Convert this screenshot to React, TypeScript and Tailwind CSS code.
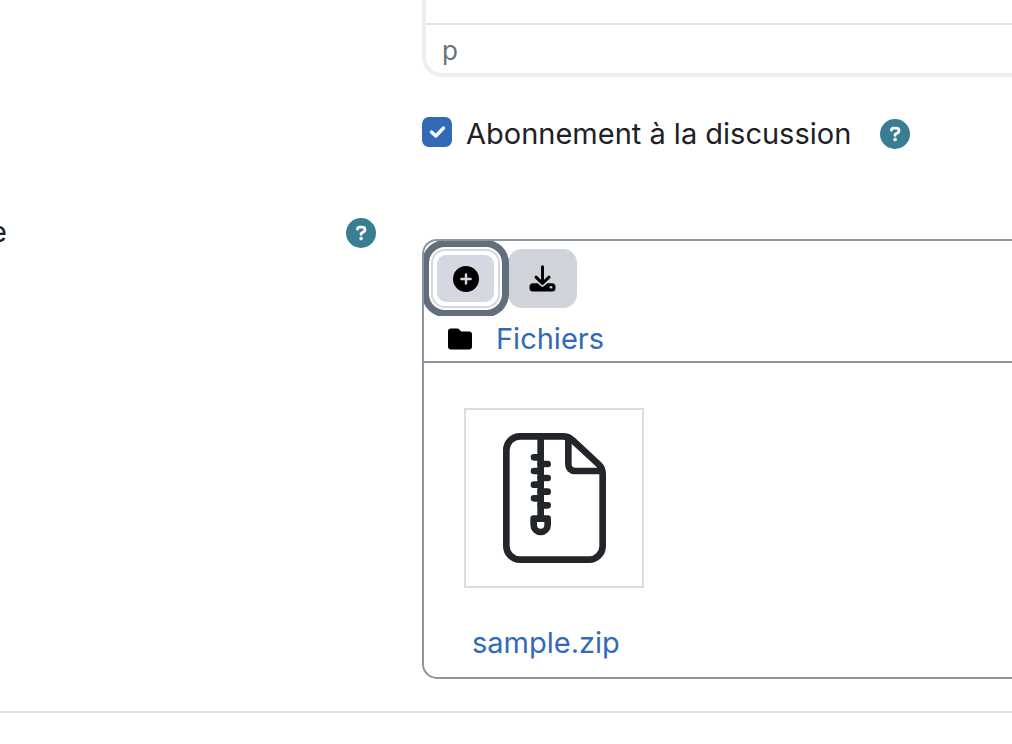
import React from "react";

function HelpButton({ label }: { label: string }) {
  return (
    <button type="button" aria-label={label} className="block size-[30px] shrink-0 rounded-full">
      <svg viewBox="0 0 30 30" className="size-full" aria-hidden="true">
        <circle cx="15" cy="15" r="15" fill="#397d92" />
        <path
          d="M11.4 11.2C11.4 9.8 12.4 9.2 13.7 9.2h2.4c1.7 0 2.9 1 2.9 2.5 0 1.1-.5 1.7-1.5 2.3l-2.4 1.4v1"
          fill="none"
          stroke="#fff"
          strokeWidth="2.8"
          strokeLinecap="round"
          strokeLinejoin="round"
        />
        <circle cx="15.1" cy="20.6" r="1.8" fill="#fff" />
      </svg>
    </button>
  );
}

function PlusIcon() {
  return (
    <svg viewBox="0 0 26 26" className="size-[26px]" aria-hidden="true">
      <circle cx="13" cy="13" r="13" fill="#000" />
      <path d="M13 8.4v9.200M8.400 13h9.200" stroke="#d5d8e0" strokeWidth="2.400" strokeLinecap="round" />
    </svg>
  );
}

function DownloadIcon() {
  return (
    <svg viewBox="0 0 27 27" className="size-[27px]" aria-hidden="true">
      <path
        d="M4 18.2h4.600l3.200 2.900a2.500 2.500 0 0 0 3.400 0l3.200-2.900H23a3.500 3.500 0 0 1 3.500 3.500v1.300A3.500 3.500 0 0 1 23 26.500H4A3.500 3.500 0 0 1 .5 23v-1.300A3.500 3.500 0 0 1 4 18.200Z"
        fill="#000"
      />
      <circle cx="22" cy="22.2" r="1.3" fill="#ced4da" />
      <path
        d="M13.5 1.800v15.800M7 12.200l6.500 6.200 6.500-6.200"
        fill="none"
        stroke="#000"
        strokeWidth="3"
        strokeLinecap="round"
        strokeLinejoin="round"
      />
    </svg>
  );
}

function FolderIcon() {
  return (
    <svg viewBox="0 0 24 22" className="h-[22px] w-6" aria-hidden="true">
      <path
        d="M3 .5h6.200c.9 0 1.600.4 2.200 1l1.300 1.400c.4.400.8.600 1.400.600H21a3 3 0 0 1 3 3v12a3 3 0 0 1-3 3H3a3 3 0 0 1-3-3v-15a3 3 0 0 1 3-3Z"
        fill="#000"
      />
    </svg>
  );
}

function ZipIcon() {
  return (
    <svg viewBox="0 0 309 390" className="h-[130px] w-[103px]" aria-hidden="true">
      <g fill="none" stroke="#22262a" strokeWidth="20" strokeLinecap="round" strokeLinejoin="round">
        <path d="M10 51a41 41 0 0 1 41-41h129c11 0 20 4 28 11l79 73c8 8 12 17 12 28v217a41 41 0 0 1-41 41H51a41 41 0 0 1-41-41Z" />
        <path d="M196 14v80c0 12 8 20 20 20h78" />
        <path d="M113 12v238" />
        <path d="M93 73h20M113 93h21M93 114h20M113 135h21M93 155h20M113 176h21M93 196h20M113 217h21" />
        <path d="M92 257h42v19a21 21 0 0 1-42 0Z" />
      </g>
    </svg>
  );
}

export default function App() {
  return (
    <main className="overflow-hidden bg-white font-['Inter','Liberation_Sans',sans-serif] text-[29px] leading-[42px] text-[#1d2125]">
      <section className="pl-[422px]">
        <div className="rounded-bl-[20px] border-b-4 border-l-4 border-[#eeeeee] pt-[23px]">
          <div className="h-[50px] border-t-2 border-[#e3e3e3] px-4 pt-[5px] text-[26px] text-[#6a737b]">p</div>
        </div>
        <div className="flex items-start pt-10">
          <div className="flex items-start gap-[14px]">
            <span className="grid">
              <input
                id="subscribe"
                type="checkbox"
                defaultChecked
                className="col-start-1 row-start-1 size-[30px] appearance-none rounded-[7px] bg-[#326ab8]"
              />
              <svg viewBox="0 0 30 30" className="pointer-events-none col-start-1 row-start-1 size-[30px]" aria-hidden="true">
                <path
                  d="m9.5 15 4.300 4L21.500 11"
                  fill="none"
                  stroke="#fff"
                  strokeWidth="3.400"
                  strokeLinecap="round"
                  strokeLinejoin="round"
                />
              </svg>
            </span>
            <label htmlFor="subscribe" className="-mt-1 whitespace-nowrap">
              Abonnement à la discussion
            </label>
          </div>
          <div className="ml-[29px] pt-[2px]">
            <HelpButton label="Aide sur l'abonnement" />
          </div>
        </div>
      </section>

      <section className="flex items-start pt-[60px]">
        <div className="-ml-[10px] flex w-[386px] shrink-0 justify-between">
          <span className="-mt-1">e</span>
          <div className="pt-[3px]">
            <HelpButton label="Aide sur les fichiers" />
          </div>
        </div>
        <div className="ml-[46px] mt-6 min-w-0 flex-1 rounded-l-[15px] border-2 border-r-0 border-[#8f959e]">
          <div className="flex gap-2 overflow-hidden rounded-tl-[13px] pb-2 pl-[7px] pt-2">
            <button
              type="button"
              aria-label="Ajouter"
              className="relative z-10 flex h-[59px] w-[69px] items-center justify-center rounded-[14px] border-2 border-[#d5d8e0] bg-white p-1 shadow-[0_0_0_2px_#fff,0_0_0_9px_#626e7c]"
            >
              <span className="flex size-full items-center justify-center rounded-[9px] bg-[#d5d8e0]">
                <PlusIcon />
              </span>
            </button>
            <button
              type="button"
              aria-label="Télécharger"
              className="flex h-[59px] w-[69px] items-center justify-center rounded-[14px] bg-[#ced4da]"
            >
              <DownloadIcon />
            </button>
          </div>
          <nav className="flex h-[47px] items-center gap-6 border-b-2 border-[#8f959e] pl-6">
            <FolderIcon />
            <a href="#fichiers" className="text-[#326ab8]">
              Fichiers
            </a>
          </nav>
          <div className="px-10 pb-[13px] pt-[45px]">
            <a href="#sample" className="block w-[180px] text-[#326ab8]">
              <span className="flex h-[180px] items-center justify-center border-2 border-[#dcdcdc]">
                <ZipIcon />
              </span>
              <span className="mt-[34px] block pl-2">sample.zip</span>
            </a>
          </div>
        </div>
      </section>
      <hr className="mt-8 border-t-2 border-[#dee2e6]" />
    </main>
  );
}
